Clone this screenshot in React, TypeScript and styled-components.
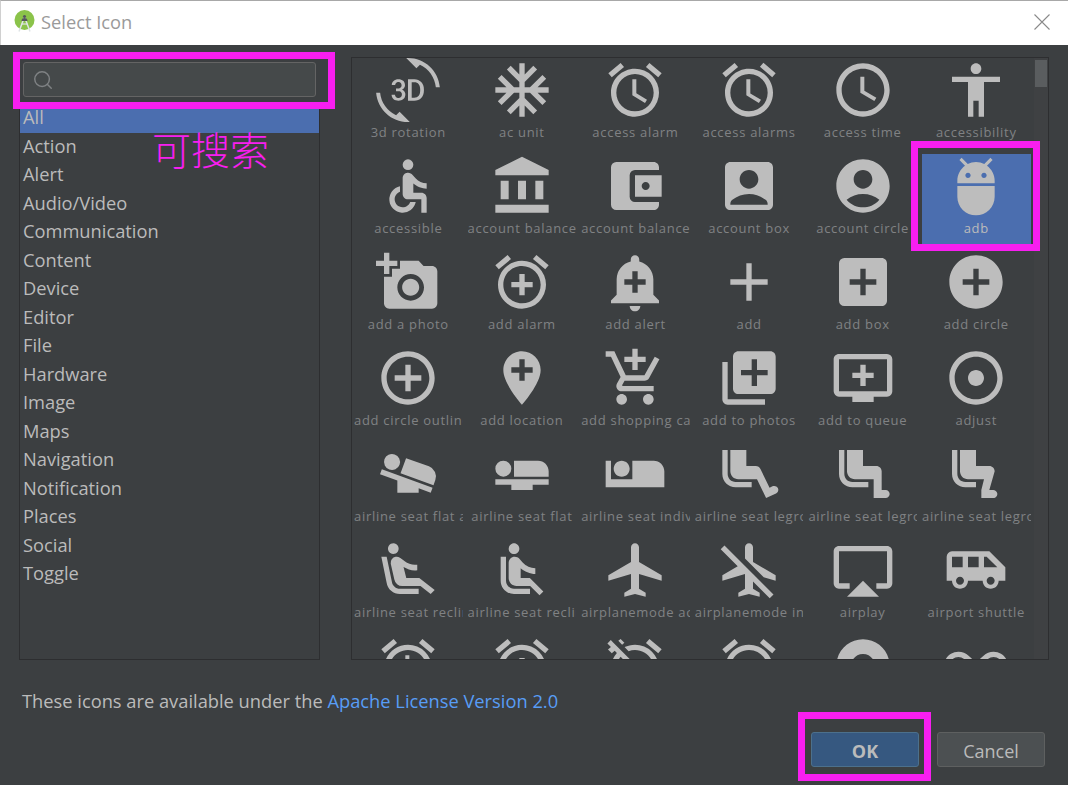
import styled, { createGlobalStyle } from 'styled-components'
import { Search } from 'lucide-react'
import type { IconType } from 'react-icons'
import {
  Md3dRotation,
  MdAcUnit,
  MdAccessAlarm,
  MdAccessAlarms,
  MdAccessTime,
  MdAccessibility,
  MdAccessible,
  MdAccountBalance,
  MdAccountBalanceWallet,
  MdAccountBox,
  MdAccountCircle,
  MdAdb,
  MdAddAPhoto,
  MdAddAlarm,
  MdAddAlert,
  MdAdd,
  MdAddBox,
  MdAddCircle,
  MdAddCircleOutline,
  MdAddLocation,
  MdAddShoppingCart,
  MdAddToPhotos,
  MdAddToQueue,
  MdAdjust,
  MdAirlineSeatFlatAngled,
  MdAirlineSeatFlat,
  MdAirlineSeatIndividualSuite,
  MdAirlineSeatLegroomExtra,
  MdAirlineSeatLegroomNormal,
  MdAirlineSeatLegroomReduced,
  MdAirlineSeatReclineExtra,
  MdAirlineSeatReclineNormal,
  MdAirplanemodeActive,
  MdAirplanemodeInactive,
  MdAirplay,
  MdAirportShuttle,
  MdAlarm,
  MdAlarmAdd,
  MdAlarmOff,
  MdAlarmOn,
  MdAlbum,
  MdAllInclusive,
} from 'react-icons/md'

const GlobalStyle = createGlobalStyle`
  html, body {
    margin: 0;
    padding: 0;
    background: #3c3f41;
  }
  * {
    box-sizing: border-box;
  }
`

const Window = styled.div`
  position: relative;
  width: 1068px;
  height: 785px;
  overflow: hidden;
  display: flex;
  flex-direction: column;
  background: #3c3f41;
  color: #bbbbbb;
  font-family: 'Open Sans', 'Noto Sans', sans-serif;
`

const TitleBar = styled.div`
  height: 45px;
  flex: none;
  display: flex;
  align-items: center;
  padding: 0 18px 3px 13px;
  gap: 6px;
  background: #fff;
  border-top: 1px solid #a8a8a8;
  border-left: 1px solid #d0d0d0;
`

const Title = styled.div`
  flex: 1;
  font-size: 18.3px;
  color: #9a9a9a;
`

const Main = styled.div`
  display: flex;
  gap: 31px;
  padding: 12px 19px 0;
  height: 615px;
  flex: none;
`

const LeftColumn = styled.div`
  width: 301px;
  display: flex;
  flex-direction: column;
`

const SearchArea = styled.div`
  height: 47px;
  flex: none;
  padding: 5px 4px 0;
`

const SearchField = styled.div`
  height: 35px;
  display: flex;
  align-items: center;
  padding-left: 8px;
  background: #45494a;
  border: 1px solid #646464;
  border-radius: 3px;
  color: #7f8284;
`

const CategoryList = styled.div`
  flex: 1;
  border: 1px solid #2d2e30;
  border-top: 0;
`

const Category = styled.div<{ $selected?: boolean }>`
  height: 28.5px;
  line-height: 26.5px;
  padding-left: 3px;
  font-size: 18.3px;
  background: ${(p) => (p.$selected ? '#4b6eaf' : 'transparent')};
`

const IconPanel = styled.div`
  width: 698px;
  display: flex;
  border: 1px solid #2d2e30;
  overflow: hidden;
`

const IconGrid = styled.div`
  flex: 1;
  display: grid;
  grid-template-columns: repeat(6, 108.6px);
  grid-auto-rows: 91px;
  column-gap: 5px;
  row-gap: 5px;
  padding: 0 0 0 2px;
  align-content: start;
  overflow: hidden;
`

const IconCell = styled.div<{ $selected?: boolean }>`
  display: flex;
  flex-direction: column;
  align-items: stretch;
  background: ${(p) => (p.$selected ? '#4b6eaf' : 'transparent')};
  color: #bdbdbd;

  svg {
    display: block;
    margin: 0 auto;
    flex: none;
  }
`

const IconLabel = styled.div<{ $selected?: boolean }>`
  height: 20px;
  line-height: 20px;
  font-size: 13px;
  letter-spacing: 0.7px;
  text-align: center;
  white-space: nowrap;
  overflow: hidden;
  color: ${(p) => (p.$selected ? '#bbbbbb' : '#808284')};
`

const ScrollTrack = styled.div`
  width: 14px;
  flex: none;
  padding: 2px 0 0 1px;
  background: #3f4143;
`

const ScrollThumb = styled.div`
  width: 12px;
  height: 27px;
  background: #5a5d5f;
`

const Footer = styled.div`
  flex: 1;
  padding: 28px 46px 0 22px;
  display: flex;
  flex-direction: column;
`

const LicenseLine = styled.div`
  font-size: 18.3px;
  line-height: 26px;
`

const LicenseLink = styled.span`
  color: #589df6;
`

const Buttons = styled.div`
  display: flex;
  justify-content: flex-end;
  gap: 18px;
  margin-top: 18px;
  margin-right: -23px;
`

const Button = styled.div<{ $primary?: boolean }>`
  width: 108px;
  height: 35px;
  padding-top: 2px;
  display: flex;
  align-items: center;
  justify-content: center;
  border-radius: 3px;
  font-size: 18px;
  font-weight: ${(p) => (p.$primary ? 700 : 400)};
  background: ${(p) => (p.$primary ? '#365880' : '#4c5052')};
  border: 1px solid ${(p) => (p.$primary ? '#4c708c' : '#5e6060')};
`

const Mark = styled.div`
  position: absolute;
  border: 7px solid #f81ef0;
  pointer-events: none;
`

const SearchMark = styled(Mark)`
  left: 13px;
  top: 52px;
  width: 322px;
  height: 57px;
`

const AdbMark = styled(Mark)`
  left: 911px;
  top: 141px;
  width: 129px;
  height: 110px;
`

const OkMark = styled(Mark)`
  left: 798px;
  top: 712px;
  width: 133px;
  height: 69px;
`

const SearchNote = styled.div`
  position: absolute;
  left: 152px;
  top: 122px;
  font-family: 'Noto Sans CJK SC', sans-serif;
  font-size: 39px;
  line-height: 52px;
  font-weight: 300;
  color: #f81ef0;
`

const categories = [
  'All',
  'Action',
  'Alert',
  'Audio/Video',
  'Communication',
  'Content',
  'Device',
  'Editor',
  'File',
  'Hardware',
  'Image',
  'Maps',
  'Navigation',
  'Notification',
  'Places',
  'Social',
  'Toggle',
]

const icons: { name: string; icon: IconType; selected?: boolean }[] = [
  { name: '3d rotation', icon: Md3dRotation },
  { name: 'ac unit', icon: MdAcUnit },
  { name: 'access alarm', icon: MdAccessAlarm },
  { name: 'access alarms', icon: MdAccessAlarms },
  { name: 'access time', icon: MdAccessTime },
  { name: 'accessibility', icon: MdAccessibility },
  { name: 'accessible', icon: MdAccessible },
  { name: 'account balance', icon: MdAccountBalance },
  { name: 'account balance wallet', icon: MdAccountBalanceWallet },
  { name: 'account box', icon: MdAccountBox },
  { name: 'account circle', icon: MdAccountCircle },
  { name: 'adb', icon: MdAdb, selected: true },
  { name: 'add a photo', icon: MdAddAPhoto },
  { name: 'add alarm', icon: MdAddAlarm },
  { name: 'add alert', icon: MdAddAlert },
  { name: 'add', icon: MdAdd },
  { name: 'add box', icon: MdAddBox },
  { name: 'add circle', icon: MdAddCircle },
  { name: 'add circle outline', icon: MdAddCircleOutline },
  { name: 'add location', icon: MdAddLocation },
  { name: 'add shopping cart', icon: MdAddShoppingCart },
  { name: 'add to photos', icon: MdAddToPhotos },
  { name: 'add to queue', icon: MdAddToQueue },
  { name: 'adjust', icon: MdAdjust },
  { name: 'airline seat flat angled', icon: MdAirlineSeatFlatAngled },
  { name: 'airline seat flat', icon: MdAirlineSeatFlat },
  { name: 'airline seat individual suite', icon: MdAirlineSeatIndividualSuite },
  { name: 'airline seat legroom extra', icon: MdAirlineSeatLegroomExtra },
  { name: 'airline seat legroom normal', icon: MdAirlineSeatLegroomNormal },
  { name: 'airline seat legroom reduced', icon: MdAirlineSeatLegroomReduced },
  { name: 'airline seat recline extra', icon: MdAirlineSeatReclineExtra },
  { name: 'airline seat recline normal', icon: MdAirlineSeatReclineNormal },
  { name: 'airplanemode active', icon: MdAirplanemodeActive },
  { name: 'airplanemode inactive', icon: MdAirplanemodeInactive },
  { name: 'airplay', icon: MdAirplay },
  { name: 'airport shuttle', icon: MdAirportShuttle },
  { name: 'alarm', icon: MdAlarm },
  { name: 'alarm add', icon: MdAlarmAdd },
  { name: 'alarm off', icon: MdAlarmOff },
  { name: 'alarm on', icon: MdAlarmOn },
  { name: 'album', icon: MdAlbum },
  { name: 'all inclusive', icon: MdAllInclusive },
]

const StudioLogo = () => (
  <svg width="21" height="23" viewBox="0 0 21 23" fill="none">
    <circle cx="10.5" cy="10" r="10" fill="#8bc34a" />
    <path d="M10.5 7 5 21.5M10.5 7l5.5 14.5" stroke="#dfe4e6" strokeWidth="1.5" />
    <path d="M7.5 14h6" stroke="#dfe4e6" strokeWidth="1.2" />
    <path d="M7.5 11a3 3 0 0 1 6 0z" fill="#55585c" />
    <circle cx="10.5" cy="6.5" r="1.6" fill="#55585c" />
  </svg>
)

const CloseIcon = () => (
  <svg width="16" height="16" viewBox="0 0 16 16" stroke="#8a8a8a" strokeWidth="1.1">
    <path d="M0.5 0.5 15.5 15.5M15.5 0.5 0.5 15.5" />
  </svg>
)

const App = () => {
  return (
    <Window>
      <GlobalStyle />
      <TitleBar>
        <StudioLogo />
        <Title>Select Icon</Title>
        <CloseIcon />
      </TitleBar>
      <Main>
        <LeftColumn>
          <SearchArea>
            <SearchField>
              <Search size={22} strokeWidth={1.6} />
            </SearchField>
          </SearchArea>
          <CategoryList>
            {categories.map((name, i) => (
              <Category key={name} $selected={i === 0}>
                {name}
              </Category>
            ))}
          </CategoryList>
        </LeftColumn>
        <IconPanel>
          <IconGrid>
            {icons.map(({ name, icon: Icon, selected }) => (
              <IconCell key={name} $selected={selected}>
                <Icon size={64} />
                <IconLabel $selected={selected}>{name}</IconLabel>
              </IconCell>
            ))}
          </IconGrid>
          <ScrollTrack>
            <ScrollThumb />
          </ScrollTrack>
        </IconPanel>
      </Main>
      <Footer>
        <LicenseLine>
          These icons are available under the <LicenseLink>Apache License Version 2.0</LicenseLink>
        </LicenseLine>
        <Buttons>
          <Button $primary>OK</Button>
          <Button>Cancel</Button>
        </Buttons>
      </Footer>
      <SearchMark />
      <AdbMark />
      <OkMark />
      <SearchNote>可搜索</SearchNote>
    </Window>
  )
}

export default App
